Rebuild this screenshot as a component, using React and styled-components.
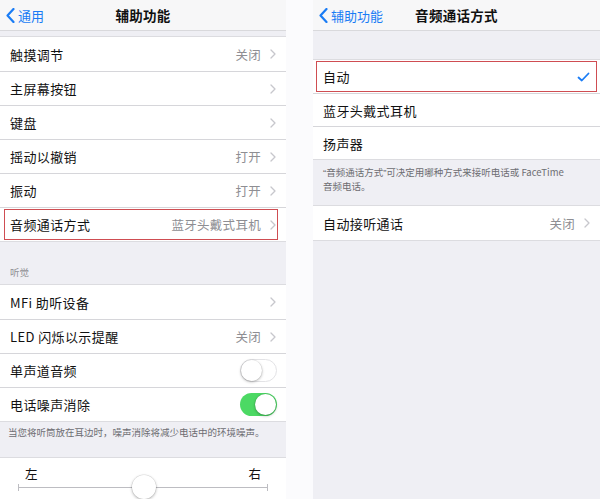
import React from 'react';
import styled, { createGlobalStyle } from 'styled-components';

const GlobalStyle = createGlobalStyle`
  html, body {
    margin: 0;
    padding: 0;
    background: #ffffff;
  }
  body {
    font-family: "Noto Sans CJK SC", "Noto Sans", sans-serif;
    color: #000;
    -webkit-font-smoothing: antialiased;
  }
`;

const Page = styled.div`
  display: flex;
  width: 600px;
  height: 499px;
  overflow: hidden;
  background: #fbfbfd;
`;

const Screen = styled.div`
  width: ${(p) => p.width}px;
  height: 499px;
  flex: none;
  display: flex;
  flex-direction: column;
  background: #efeff4;
  overflow: hidden;
`;

const Gutter = styled.div`
  flex: 1;
`;

const NavBar = styled.div`
  position: relative;
  height: 31px;
  flex: none;
  display: flex;
  align-items: center;
  justify-content: center;
  background: #f7f7f8;
  border-bottom: 1px solid #d9d9dc;
  box-sizing: border-box;
`;

const BackButton = styled.div`
  position: absolute;
  left: 6px;
  top: 0;
  bottom: 0;
  display: flex;
  align-items: center;
  gap: 3px;
  color: #1a7cf5;
  font-size: 13px;
`;

const NavTitle = styled.div`
  font-size: 13.5px;
  font-weight: 600;
  color: #111;
  letter-spacing: 0.3px;
`;

const Spacer = styled.div`
  height: ${(p) => p.h}px;
  flex: none;
`;

const Group = styled.div`
  background: #fff;
  flex: none;
  border-top: 1px solid #dcdce0;
  border-bottom: 1px solid #dcdce0;
`;

const Row = styled.div`
  position: relative;
  height: ${(p) => p.h || 34}px;
  display: flex;
  align-items: center;
  padding: 0 10px 0 10px;
  box-sizing: border-box;
  font-size: 13px;
  & + & {
    border-top: 0.5px solid #d6d6da;
  }
  ${(p) =>
    p.marked &&
    `
    &::after {
      content: '';
      position: absolute;
      left: ${p.markLeft ?? 4}px;
      right: ${p.markRight ?? 8}px;
      top: 1px;
      bottom: 1px;
      border: 1.5px solid #cf4d52;
      pointer-events: none;
    }
  `}
`;

const Label = styled.span`
  flex: 1;
  color: #111;
  letter-spacing: 0.4px;
`;

const Value = styled.span`
  color: #8e8e93;
  font-size: 12.5px;
  margin-right: 9px;
  letter-spacing: 0.3px;
`;

const SectionHeader = styled.div`
  height: 42px;
  flex: none;
  display: flex;
  align-items: flex-end;
  padding: 0 0 5px 10px;
  box-sizing: border-box;
  font-size: 9.5px;
  color: #8e8e93;
`;

const Footnote = styled.div`
  flex: none;
  padding: ${(p) => p.pad};
  font-size: 9.5px;
  line-height: 13.5px;
  color: #6d6d72;
  box-sizing: border-box;
  height: ${(p) => p.h}px;
`;

const Quote = styled.span`
  font-family: "Liberation Sans", sans-serif;
`;

const SwitchTrack = styled.div`
  position: relative;
  width: 37px;
  height: 23px;
  border-radius: 12px;
  box-sizing: border-box;
  background: ${(p) => (p.on ? '#4cd964' : '#fff')};
  border: ${(p) => (p.on ? 'none' : '1.5px solid #e3e3e6')};
  margin-right: -1px;
`;

const SwitchKnob = styled.div`
  position: absolute;
  top: ${(p) => (p.on ? 1 : -0.5)}px;
  ${(p) => (p.on ? 'right: 1px;' : 'left: -0.5px;')}
  width: 21px;
  height: 21px;
  border-radius: 50%;
  background: #fff;
  box-shadow: 0 1px 3px rgba(0, 0, 0, 0.3), 0 0 0 0.5px rgba(0, 0, 0, 0.08);
`;

const SliderBox = styled.div`
  flex: 1;
  background: #fff;
  border-top: 1px solid #dcdce0;
  padding: 7px 18px 0 18px;
  display: flex;
  flex-direction: column;
`;

const SliderLabels = styled.div`
  display: flex;
  justify-content: space-between;
  padding: 0 7px 0 7px;
  font-size: 12.5px;
  color: #111;
  line-height: 17px;
`;

const SliderTrack = styled.div`
  position: relative;
  margin-top: 5px;
  height: 1px;
  background: #bdbdc2;
  &::before,
  &::after {
    content: '';
    position: absolute;
    top: -3px;
    width: 1px;
    height: 7px;
    background: #bdbdc2;
  }
  &::before {
    left: 0;
  }
  &::after {
    right: 0;
  }
`;

const SliderThumb = styled.div`
  position: absolute;
  top: -12px;
  width: 24px;
  height: 24px;
  margin-left: -12px;
  border-radius: 50%;
  background: #fff;
  box-shadow: 0 1px 3px rgba(0, 0, 0, 0.3), 0 0 0 0.5px rgba(0, 0, 0, 0.1);
`;

const Chevron = () => (
  <svg width="6" height="10" viewBox="0 0 6 10">
    <path d="M1 1 L5 5 L1 9" fill="none" stroke="#c7c7cc" strokeWidth="1.3" strokeLinecap="round" strokeLinejoin="round" />
  </svg>
);

const BackChevron = () => (
  <svg width="9" height="15" viewBox="0 0 9 15">
    <path d="M7.5 1 L1.5 7.5 L7.5 14" fill="none" stroke="#1a7cf5" strokeWidth="2.2" strokeLinecap="round" strokeLinejoin="round" />
  </svg>
);

const Check = () => (
  <svg width="13" height="10" viewBox="0 0 13 10">
    <path d="M1.5 5.5 L4.8 8.5 L11.5 1.5" fill="none" stroke="#1a7cf5" strokeWidth="1.8" strokeLinecap="round" strokeLinejoin="round" />
  </svg>
);

const Switch = ({ on }) => (
  <SwitchTrack on={on ? 1 : 0}>
    <SwitchKnob on={on ? 1 : 0} />
  </SwitchTrack>
);

const NavRow = ({ label, value, ...rest }) => (
  <Row {...rest}>
    <Label>{label}</Label>
    {value && <Value>{value}</Value>}
    <Chevron />
  </Row>
);

const leftTop = [
  { label: '触摸调节', value: '关闭' },
  { label: '主屏幕按钮' },
  { label: '键盘' },
  { label: '摇动以撤销', value: '打开' },
  { label: '振动', value: '打开' },
  { label: '音频通话方式', value: '蓝牙头戴式耳机', marked: true },
];

const AccessibilityScreen = () => (
  <Screen width={286}>
    <NavBar>
      <BackButton>
        <BackChevron />
        <span>通用</span>
      </BackButton>
      <NavTitle>辅助功能</NavTitle>
    </NavBar>
    <Spacer h={5} />
    <Group>
      {leftTop.map((r) => (
        <NavRow key={r.label} label={r.label} value={r.value} marked={r.marked} markRight={8} />
      ))}
    </Group>
    <SectionHeader>听觉</SectionHeader>
    <Group>
      <NavRow label="MFi 助听设备" />
      <NavRow label="LED 闪烁以示提醒" value="关闭" />
      <Row>
        <Label>单声道音频</Label>
        <Switch />
      </Row>
      <Row>
        <Label>电话噪声消除</Label>
        <Switch on />
      </Row>
    </Group>
    <Footnote h={35} pad="4px 0 0 8px">
      当您将听筒放在耳边时，噪声消除将减少电话中的环境噪声。
    </Footnote>
    <SliderBox>
      <SliderLabels>
        <span>左</span>
        <span>右</span>
      </SliderLabels>
      <SliderTrack>
        <SliderThumb style={{ left: '50.4%' }} />
      </SliderTrack>
    </SliderBox>
  </Screen>
);

const AudioRoutingScreen = () => (
  <Screen width={287}>
    <NavBar>
      <BackButton>
        <BackChevron />
        <span>辅助功能</span>
      </BackButton>
      <NavTitle>音频通话方式</NavTitle>
    </NavBar>
    <Spacer h={28} />
    <Group>
      <Row h={33} marked markLeft={3} markRight={3}>
        <Label>自动</Label>
        <Check />
      </Row>
      <Row h={33}>
        <Label>蓝牙头戴式耳机</Label>
      </Row>
      <Row h={33}>
        <Label>扬声器</Label>
      </Row>
    </Group>
    <Footnote h={45} pad="6px 10px 0 10px">
      <Quote>“</Quote>音频通话方式<Quote>”</Quote>可决定用哪种方式来接听电话或 FaceTime
      <br />
      音频电话。
    </Footnote>
    <Group>
      <NavRow label="自动接听通话" value="关闭" />
    </Group>
  </Screen>
);

export default function App() {
  return (
    <>
      <GlobalStyle />
      <Page>
        <AccessibilityScreen />
        <Gutter />
        <AudioRoutingScreen />
      </Page>
    </>
  );
}
